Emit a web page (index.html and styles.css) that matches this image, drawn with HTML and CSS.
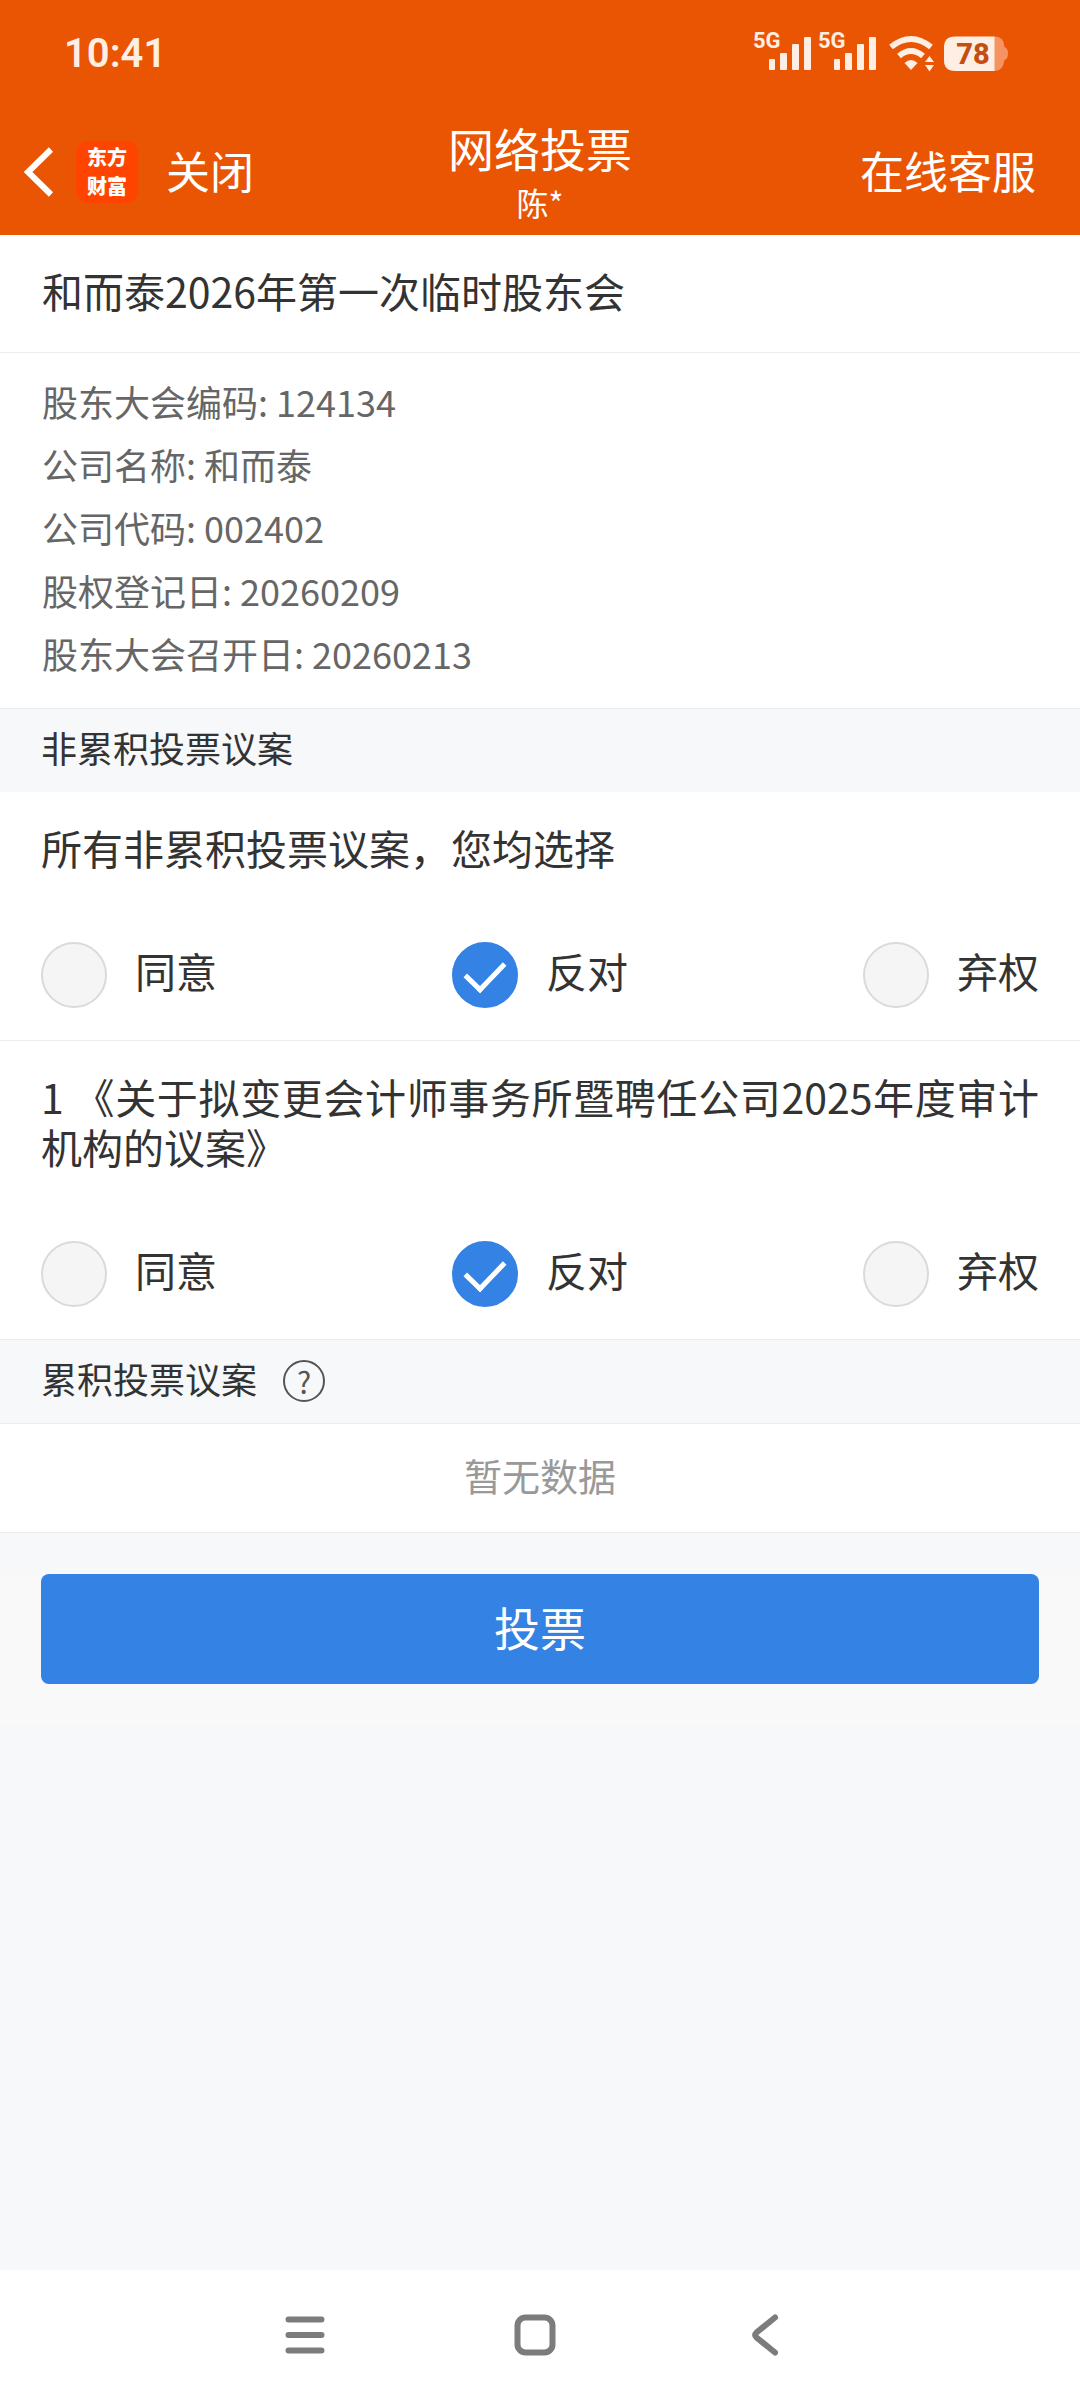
FILE: index.html
```html
<!DOCTYPE html>
<html lang="zh-CN">

<head>
    <meta charset="UTF-8">
    <meta name="viewport" content="width=device-width, initial-scale=1.0">
    <title>网络投票</title>
    <link rel="stylesheet" href="styles.css">
</head>

<body>
    <header class="header">
        <div class="status-bar">
            <span class="time">10:41</span>
            <div class="status-icons">
                <svg class="signal" width="58" height="56" viewBox="0 -6 58 56">
                    <text x="0" y="16">5G</text>
                    <rect x="16" y="27" width="6" height="11" rx="1" />
                    <rect x="27" y="21" width="7" height="17" rx="1" />
                    <rect x="39" y="12" width="7" height="26" rx="1" />
                    <rect x="51" y="5" width="7" height="33" rx="1" />
                </svg>
                <svg class="signal" width="58" height="56" viewBox="0 -6 58 56">
                    <text x="0" y="16">5G</text>
                    <rect x="16" y="27" width="6" height="11" rx="1" />
                    <rect x="27" y="21" width="7" height="17" rx="1" />
                    <rect x="39" y="12" width="7" height="26" rx="1" />
                    <rect x="51" y="5" width="7" height="33" rx="1" />
                </svg>
                <svg class="wifi" width="48" height="56" viewBox="0 -6 48 56">
                    <path d="M2 15 Q22 -1 42 15" />
                    <path d="M10 24 Q22 14 34 24" />
                    <path class="solid" d="M15.500 31 Q22 25 28.500 31 L22 38 Z" />
                    <path class="solid" d="M40.500 24 L45 30 H36 Z M40.500 39.500 L45 33 H36 Z" />
                </svg>
                <svg class="battery" width="64" height="56" viewBox="0 -6 64 56">
                    <path class="battery-rest" d="M50 4.500 H51 Q60 4.500 60.500 15 Q64 16 64 21.500 Q64 27 60.500 28 Q59 39 51 39 H50 Z" />
                    <path class="battery-level" d="M11 4.500 H50.500 V39 H11 Q0 39 0 28 V15.500 Q0 4.500 11 4.500 Z" />
                    <text x="29" y="32" text-anchor="middle">78</text>
                </svg>
            </div>
        </div>
        <nav class="nav">
            <div class="nav-left">
                <button class="nav-back" type="button" aria-label="返回">
                    <svg width="30" height="50" viewBox="0 0 30 50">
                        <path d="M27 2.500 L4 25 L27 47.500" />
                    </svg>
                </button>
                <div class="logo">东方<br>财富</div>
                <button class="nav-text" type="button">关闭</button>
            </div>
            <div class="nav-title">
                <h1>网络投票</h1>
                <p>陈*</p>
            </div>
            <div class="nav-right">
                <button class="nav-text" type="button">在线客服</button>
            </div>
        </nav>
    </header>

    <main class="content">
        <h2 class="meeting-title">和而泰2026年第一次临时股东会</h2>
        <ul class="meeting-info">
            <li>股东大会编码: 124134</li>
            <li>公司名称: 和而泰</li>
            <li>公司代码: 002402</li>
            <li>股权登记日: 20260209</li>
            <li>股东大会召开日: 20260213</li>
        </ul>

        <h3 class="section-title">非累积投票议案</h3>
        <div class="proposal">
            <p class="proposal-title">所有非累积投票议案，您均选择</p>
            <div class="options">
                <label class="option"><input type="radio" name="all" value="agree"><span>同意</span></label>
                <label class="option"><input type="radio" name="all" value="against" checked><span>反对</span></label>
                <label class="option"><input type="radio" name="all" value="abstain"><span>弃权</span></label>
            </div>
        </div>
        <div class="proposal">
            <p class="proposal-title">1 《关于拟变更会计师事务所暨聘任公司2025年度审计机构的议案》</p>
            <div class="options">
                <label class="option"><input type="radio" name="p1" value="agree"><span>同意</span></label>
                <label class="option"><input type="radio" name="p1" value="against" checked><span>反对</span></label>
                <label class="option"><input type="radio" name="p1" value="abstain"><span>弃权</span></label>
            </div>
        </div>

        <h3 class="section-title section-line">累积投票议案
            <button class="help" type="button" aria-label="说明">?</button>
        </h3>
        <p class="empty">暂无数据</p>

        <div class="submit">
            <button class="submit-btn" type="button">投票</button>
        </div>
    </main>

    <footer class="system-nav">
        <button type="button" aria-label="菜单">
            <svg width="44" height="44" viewBox="0 0 44 44">
                <path d="M5.500 6.500 H38.500 M5.500 22 H38.500 M5.500 37.500 H38.500" />
            </svg>
        </button>
        <button type="button" aria-label="主页">
            <svg width="44" height="44" viewBox="0 0 44 44">
                <rect x="4.500" y="4.500" width="35" height="35" rx="8" />
            </svg>
        </button>
        <button type="button" aria-label="返回">
            <svg width="44" height="44" viewBox="0 0 44 44">
                <path d="M32 4.500 L13.500 19.500 Q11 22 13.500 24.500 L32 39.500" />
            </svg>
        </button>
    </footer>
</body>

</html>
```

FILE: styles.css
```css
* {
    box-sizing: border-box;
    margin: 0;
    padding: 0;
}

body {
    display: flex;
    flex-direction: column;
    min-height: 100vh;
    background-color: #f6f8fa;
    color: #333;
    font-family: "Noto Sans CJK SC", sans-serif;
    font-size: 41px;
    line-height: 50px;
}

button {
    border: none;
    background: none;
    color: inherit;
    font: inherit;
    cursor: pointer;
}

svg {
    display: block;
}

h1,
h2,
h3 {
    font-weight: normal;
}

/* header */
.header {
    background-color: #ea5504;
    color: #fff;
}

.status-bar {
    display: flex;
    justify-content: space-between;
    align-items: center;
    height: 108px;
    padding: 0 72px 0 64px;
    color: #ffeee4;
}

.time {
    font-family: Roboto, sans-serif;
    font-size: 40px;
    font-weight: 600;
}

.status-icons {
    display: flex;
    align-items: center;
    gap: 7px;
}

.status-icons svg {
    fill: #ffeee4;
}

.signal text {
    font-family: Roboto, sans-serif;
    font-size: 22px;
    font-weight: 700;
}

.wifi {
    margin-left: 6px;
}

.wifi path {
    fill: none;
    stroke: #ffeee4;
    stroke-width: 6;
}

.wifi .solid {
    fill: #ffeee4;
    stroke: none;
}

.battery .battery-rest {
    fill: #f59462;
}

.battery text {
    fill: #c44d10;
    font-family: Roboto, sans-serif;
    font-size: 29px;
    font-weight: 800;
}

.nav {
    display: grid;
    grid-template-columns: 1fr auto 1fr;
    align-items: center;
    height: 127px;
    padding: 0 24px;
}

.nav-left {
    display: flex;
    align-items: center;
}

.nav-back {
    margin-right: 22px;
}

.nav-back path {
    fill: none;
    stroke: #fff;
    stroke-width: 6;
}

.logo {
    width: 62px;
    height: 62px;
    padding-top: 1px;
    margin-right: 28px;
    border-radius: 12px;
    background-color: #ff4400;
    font-size: 20px;
    font-weight: 900;
    line-height: 29px;
    text-align: center;
}

.nav-text {
    padding-bottom: 4px;
    font-size: 44px;
}

.nav-title {
    padding-bottom: 2px;
    text-align: center;
}

.nav-title h1 {
    font-size: 46px;
    line-height: 62px;
}

.nav-title p {
    font-size: 32px;
    line-height: 48px;
}

.nav-right {
    padding-right: 20px;
    text-align: right;
}

/* content */
.content {
    flex: 1;
}

.meeting-title {
    padding: 30px 42px 37px;
    border-bottom: 1px solid #ececec;
    background-color: #fff;
    font-size: 41px;
}

.meeting-info {
    padding: 17px 42px 23px;
    border-bottom: 1px solid #ececec;
    background-color: #fff;
    color: #666;
    font-size: 36px;
    line-height: 63px;
    list-style: none;
}

.section-title {
    display: flex;
    align-items: center;
    gap: 26px;
    height: 83px;
    padding: 0 41px 8px;
    font-size: 36px;
}

.section-line {
    height: 84px;
    border-bottom: 1px solid #ececec;
}

.help {
    width: 42px;
    height: 42px;
    margin-top: 6px;
    border: 2px solid #555;
    border-radius: 50%;
    color: #555;
    font-size: 30px;
    line-height: 36px;
}

.proposal {
    padding: 30px 41px 32px;
    border-bottom: 1px solid #ececec;
    background-color: #fff;
}

.proposal-title {
    margin-bottom: 70px;
    text-align: justify;
}

.options {
    display: flex;
    justify-content: space-between;
}

.option {
    display: flex;
    align-items: center;
    gap: 28px;
    cursor: pointer;
}

.option span {
    padding-bottom: 10px;
}

.option input {
    appearance: none;
    width: 66px;
    height: 66px;
    border: 2px solid #dadada;
    border-radius: 50%;
    background-color: #f5f5f5;
}

.option input:checked {
    display: grid;
    place-items: center;
    border-color: #3482e3;
    background-color: #3482e3;
}

.option input:checked::before {
    content: "";
    width: 33px;
    height: 18px;
    margin-bottom: 8px;
    border-left: 5px solid #fff;
    border-bottom: 5px solid #fff;
    transform: rotate(-46deg);
}

.empty {
    padding: 26px 41px 32px;
    border-bottom: 1px solid #ececec;
    background-color: #fff;
    color: #999;
    font-size: 38px;
    text-align: center;
}

.submit {
    margin-top: 41px;
    padding: 0 41px 41px;
    background-color: #f9f9f9;
}

.submit-btn {
    display: block;
    width: 100%;
    height: 110px;
    padding-bottom: 6px;
    border-radius: 8px;
    background-color: #3482e3;
    color: #fff;
    font-size: 46px;
}

/* system navigation */
.system-nav {
    display: flex;
    justify-content: center;
    align-items: center;
    gap: 186px;
    height: 130px;
    padding-right: 10px;
    background-color: #fff;
}

.system-nav svg {
    fill: none;
    stroke: #7c7c7c;
    stroke-width: 6;
    stroke-linecap: round;
}
```
